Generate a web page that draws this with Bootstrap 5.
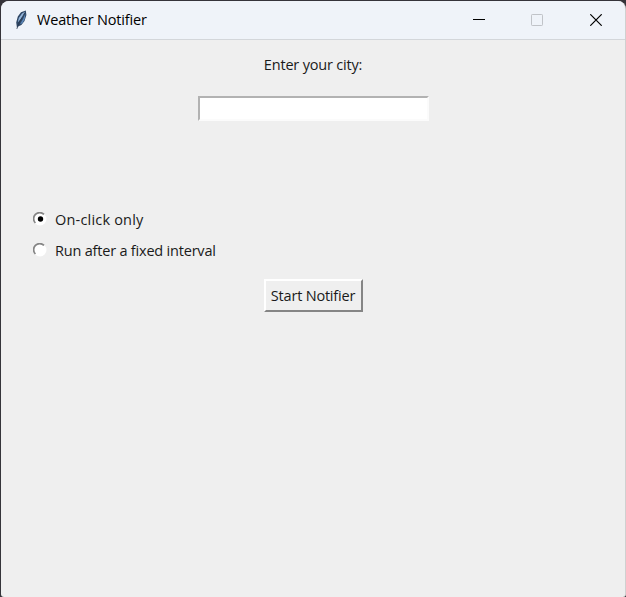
<!DOCTYPE html>
<html lang="en">
<head>
<meta charset="utf-8">
<meta name="viewport" content="width=device-width, initial-scale=1">
<title>Weather Notifier</title>
<link rel="stylesheet" href="https://cdn.jsdelivr.net/npm/bootstrap@5.3.0/dist/css/bootstrap.min.css">
<style>
body{height:597px;background:#35343a;font-family:"Open Sans","Noto Sans",sans-serif;font-size:14.5px;line-height:20px;color:#1a1a1a;padding:1px 0 0 1px}
.app-window{height:596px;background:#efefef;border-radius:8px 8px 3px 3px;border-right:1px solid #d0d0d0}
.title-bar{height:39px;background:#eff3f9;border-bottom:1px solid #d3d6da;color:#000;padding-left:13px}
.title-text{margin-left:9px;font-size:14.5px;letter-spacing:-.18px}
.caption-btn{width:58.5px;height:38px;background:none}
.city-label{margin-top:15px;letter-spacing:-.19px}
.city-input{width:231px;height:25px;margin-top:21px;border:2px solid;border-color:#b2b2b2 #fbfbfb #fbfbfb #b2b2b2;background:#fff;outline:0}
.mode-list{margin-top:82px;padding-left:32px}
.mode{height:31px}
.mode-text{margin-left:8px;padding-top:2px;letter-spacing:-.2px}
.mode-click{letter-spacing:.19px}
.start-btn{width:99px;height:33px;margin-top:14px;background:#efefef;border:2px solid;border-color:#fff #858585 #858585 #fff;color:#1a1a1a;letter-spacing:-.2px}
</style>
<script src="https://cdn.jsdelivr.net/npm/bootstrap@5.3.0/dist/js/bootstrap.bundle.min.js"></script>
</head>
<body class="overflow-hidden">
<div class="app-window d-flex flex-column overflow-hidden">
  <header class="title-bar d-flex align-items-center flex-shrink-0">
    <svg width="14" height="20" viewBox="0 0 14 20" aria-hidden="true">
      <path d="M3 18 2.2 12.5 3.8 6.5 7 2.2 11.8 .6 12.4 5 10.5 11 7.4 15 4 16.6z" fill="#2f4765"/>
      <path d="M3.8 12.5 4.8 8 8 3.4 11 1.8 8.8 6.2z" fill="#94b6dc"/>
      <path d="M6 14.2 9 9 11.4 3.6 10.8 8.8 8.4 13.2z" fill="#5c88ba"/>
      <path d="M2.8 19 5.2 12.6 10.6 3" fill="none" stroke="#26374c" stroke-width=".7"/>
    </svg>
    <span class="title-text text-nowrap">Weather Notifier</span>
    <div class="d-flex ms-auto">
      <button class="caption-btn border-0 p-0 d-flex align-items-center justify-content-center" aria-label="Minimize"><svg width="12" height="12"><path d="M0 5.5h12" stroke="#000"/></svg></button>
      <button class="caption-btn border-0 p-0 d-flex align-items-center justify-content-center" aria-label="Maximize" disabled><svg width="12" height="12"><rect x=".5" y=".5" width="11" height="11" rx=".7" fill="none" stroke="#c0c3c8"/></svg></button>
      <button class="caption-btn border-0 p-0 d-flex align-items-center justify-content-center" aria-label="Close"><svg width="12" height="12"><path d="M.3.3 11.7 11.7M11.7.3.3 11.7" stroke="#000" stroke-width="1.2"/></svg></button>
    </div>
  </header>
  <main class="d-flex flex-column align-items-center">
    <label class="city-label" for="city">Enter your city:</label>
    <input class="city-input" id="city" type="text">
    <div class="mode-list align-self-stretch">
      <div class="mode d-flex align-items-center">
        <svg width="14" height="14" viewBox="0 0 14 14"><circle cx="7" cy="7" r="6.5" fill="#fff"/><path d="M2.4 11A6 6 0 0 1 11 2.4" fill="none" stroke="#858585" stroke-width="1.7"/><circle cx="7.5" cy="7" r="2.7" fill="#000"/></svg>
        <span class="mode-text mode-click">On-click only</span>
      </div>
      <div class="mode d-flex align-items-center">
        <svg width="14" height="14" viewBox="0 0 14 14"><circle cx="7" cy="7" r="6.5" fill="#fff"/><path d="M2.4 11A6 6 0 0 1 11 2.4" fill="none" stroke="#858585" stroke-width="1.7"/></svg>
        <span class="mode-text">Run after a fixed interval</span>
      </div>
    </div>
    <button class="start-btn p-0 text-nowrap">Start Notifier</button>
  </main>
</div>
</body>
</html>
